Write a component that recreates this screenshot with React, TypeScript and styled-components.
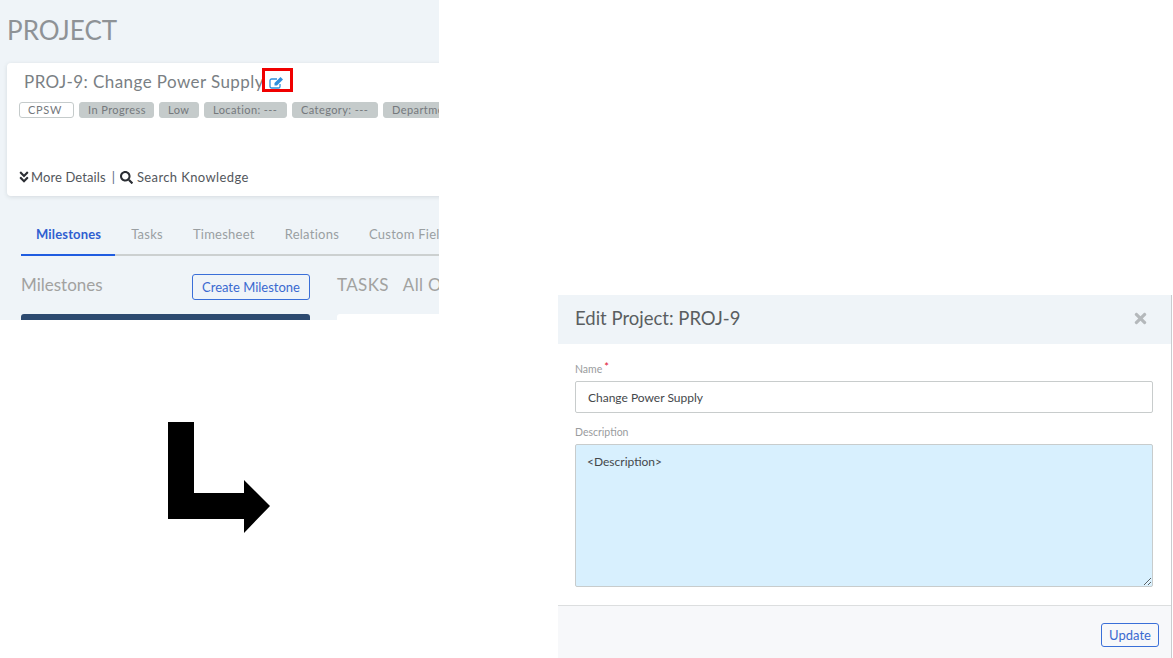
import * as React from 'react'
import styled, { createGlobalStyle } from 'styled-components'
import { FaAngleDoubleDown, FaSearch, FaTimes } from 'react-icons/fa'

const GlobalStyle = createGlobalStyle`
  html, body {
    margin: 0;
    padding: 0;
    background: #ffffff;
  }
`
const Canvas = styled.div`
  width: 1173px;
  height: 658px;
  overflow: hidden;
  display: grid;
  grid-template-columns: 439px 119px 614px;
  font-family: 'Lato', 'Open Sans', sans-serif;
`
const LeftColumn = styled.div`
  display: flex;
  flex-direction: column;
`
const ProjectShot = styled.div`
  height: 320px;
  background: #eff4f8;
  overflow: hidden;
  padding: 14px 0 0 7px;
  box-sizing: border-box;
  font-family: 'Lato', sans-serif;
`
const PageTitle = styled.div`
  font-size: 26px;
  line-height: 32px;
  font-weight: 400;
  color: #8e9296;
  letter-spacing: 0.05px;
`
const Card = styled.div`
  margin-top: 17px;
  height: 133px;
  width: 440px;
  background: #ffffff;
  border-radius: 4px;
  box-shadow: 0 1px 4px rgba(60, 70, 80, 0.14);
  padding: 5px 0 0 12px;
  box-sizing: border-box;
  display: flex;
  flex-direction: column;
`
const TitleRow = styled.div`
  display: flex;
  align-items: center;
  height: 24px;
  padding-left: 5px;
`
const CardTitle = styled.span`
  font-size: 17px;
  line-height: 28px;
  padding-top: 4px;
  letter-spacing: 0.42px;
  color: #7a7f84;
  white-space: nowrap;
  width: 238px;
`
const EditBox = styled.span`
  width: 31px;
  height: 24px;
  box-sizing: border-box;
  border: 3px solid #f00000;
  display: flex;
  align-items: center;
  justify-content: center;
  padding: 5px 3px 0 0;
`
const BadgeRow = styled.div`
  display: flex;
  gap: 5px;
  margin-top: 10px;
  white-space: nowrap;
`
const Badge = styled.span<{ $outline?: boolean; $w: number }>`
  flex: none;
  width: ${({ $w }) => $w}px;
  height: 16px;
  box-sizing: border-box;
  line-height: 14px;
  padding-left: 8px;
  border-radius: 3px;
  font-size: 11px;
  letter-spacing: ${({ $outline }) => ($outline ? 0.7 : 0.42)}px;
  color: #74787c;
  background: ${({ $outline }) => ($outline ? '#ffffff' : '#c5cbcb')};
  border: 1px solid #c5cbcb;
`
const LinkRow = styled.div`
  display: flex;
  align-items: center;
  margin-top: 51px;
  font-size: 13px;
  color: #53575c;
  white-space: nowrap;
  svg {
    color: #2a2d33;
    flex: none;
  }
`
const ChevronIcon = styled(FaAngleDoubleDown)`
  font-size: 14px;
  margin-left: -2px;
`
const LinkText = styled.span<{ $spacing: number; $gap: number }>`
  letter-spacing: ${({ $spacing }) => $spacing}px;
  margin-left: ${({ $gap }) => $gap}px;
`
const LinkDivider = styled.span`
  margin: 0 5px 0 6px;
  color: #5a6a80;
`
const Tabs = styled.div`
  display: flex;
  margin: 23px 0 0 14px;
  width: 418px;
  height: 37px;
  border-bottom: 2px solid #ccd0d0;
  box-sizing: border-box;
  overflow: hidden;
`
const Tab = styled.div<{ $active?: boolean }>`
  height: 35px;
  padding: 0 15px;
  line-height: 30px;
  font-size: 13px;
  font-weight: ${({ $active }) => ($active ? 700 : 400)};
  letter-spacing: ${({ $active }) => ($active ? 0.15 : 0.25)}px;
  white-space: nowrap;
  color: ${({ $active }) => ($active ? '#2f5fd0' : '#9a9fa2')};
`
const TabMarker = styled.div`
  height: 2px;
  width: 94px;
  margin: -2px 0 0 14px;
  background: #1f5ce0;
`
const Columns = styled.div`
  display: flex;
  margin: 18px 0 0 14px;
  gap: 27px;
  width: 430px;
`
const Milestones = styled.div`
  width: 289px;
  flex: none;
`
const MilestoneHead = styled.div`
  display: flex;
  justify-content: space-between;
  height: 40px;
`
const SectionLabel = styled.span<{ $spacing: number }>`
  font-size: 17px;
  line-height: 22px;
  letter-spacing: ${({ $spacing }) => $spacing}px;
  color: #a2a2a0;
  white-space: nowrap;
`
const OutlineButton = styled.button<{ $w: number }>`
  width: ${({ $w }) => $w}px;
  box-sizing: border-box;
  height: ${({ $w }) => ($w > 100 ? 26 : 24)}px;
  padding: 0;
  background: transparent;
  border: 1px solid #3a6fd8;
  border-radius: 3px;
  color: #3a6ad0;
  font-family: inherit;
  font-size: 13px;
`
const NavyBar = styled.div`
  height: 20px;
  background: #2d4a70;
  border-radius: 3px 3px 0 0;
`
const TasksHead = styled.div`
  display: flex;
  gap: 14px;
  height: 40px;
`
const TaskCard = styled.div`
  height: 20px;
  width: 110px;
  background: #ffffff;
  border-radius: 3px 0 0 0;
`
const ArrowArea = styled.div`
  flex: 1;
  padding: 102px 0 0 168px;
`
const Modal = styled.div`
  grid-column: 3;
  margin-top: 295px;
  height: 363px;
  border-right: 1px solid #c9cccf;
  display: flex;
  flex-direction: column;
`
const ModalHeader = styled.div`
  height: 49px;
  background: #eff4f8;
  display: flex;
  align-items: center;
  justify-content: space-between;
  padding: 0 22px 3px 17px;
  box-sizing: border-box;
  flex: none;
`
const ModalTitle = styled.div`
  font-size: 18.5px;
  color: #5a5e61;
`
const CloseIcon = styled(FaTimes)`
  color: #b4b8bb;
  font-size: 17px;
`
const ModalBody = styled.div`
  height: 261px;
  padding: 18px 18px 0 17px;
  box-sizing: border-box;
`
const FieldLabel = styled.label`
  display: block;
  font-size: 10.5px;
  line-height: 14px;
  color: #9a9c9e;
`
const Required = styled.span`
  display: inline-block;
  vertical-align: 2px;
  color: #e01030;
  font-size: 11px;
  line-height: 0;
  margin-left: 2px;
`
const TextInput = styled.input`
  display: block;
  box-sizing: border-box;
  width: 100%;
  height: 32px;
  margin: 5px 0 12px;
  padding: 0 12px;
  border: 1px solid #c8cccc;
  border-radius: 2px;
  background: #ffffff;
  color: #44484b;
  font-family: inherit;
  font-size: 12px;
`
const TextArea = styled.textarea`
  display: block;
  box-sizing: border-box;
  width: 100%;
  height: 143px;
  margin-top: 5px;
  padding: 9px 11px;
  border: 1px solid #c8cccc;
  border-radius: 2px;
  background: #d8f0fe;
  color: #44484b;
  font-family: inherit;
  font-size: 12px;
  line-height: 15px;
`
const ModalFooter = styled.div`
  flex: 1;
  background: #f7f8fa;
  border-top: 1px solid #dcdedf;
  display: flex;
  justify-content: flex-end;
  padding: 17px 12px 0 0;
`

const badges = [
  { label: 'In Progress', w: 75 },
  { label: 'Low', w: 40 },
  { label: 'Location: ---', w: 83 },
  { label: 'Category: ---', w: 86 },
  { label: 'Department: ---', w: 100 },
]
const tabs = ['Milestones', 'Tasks', 'Timesheet', 'Relations', 'Custom Fields']

// pencil-in-square, the older font-awesome edit glyph
const EditIcon = () => (
  <svg width="15" height="13" viewBox="0 0 15 13" fill="none">
    <path
      d="M11 8v2.400c0 .9-.7 1.600-1.600 1.600H2.600C1.700 12 1 11.300 1 10.400V4.600C1 3.700 1.700 3 2.600 3H8"
      stroke="#2f8fdc"
      strokeWidth="1.300"
    />
    <path d="M5.500 7 11.500 1l2.500 2.500-6 6H5.500z" fill="#2f8fdc" />
  </svg>
)

export default function App() {
  return (
    <Canvas>
      <GlobalStyle />
      <LeftColumn>
        <ProjectShot>
          <PageTitle>PROJECT</PageTitle>
          <Card>
            <TitleRow>
              <CardTitle>PROJ-9: Change Power Supply</CardTitle>
              <EditBox>
                <EditIcon />
              </EditBox>
            </TitleRow>
            <BadgeRow>
              <Badge $outline $w={55}>CPSW</Badge>
              {badges.map(b => (
                <Badge key={b.label} $w={b.w}>{b.label}</Badge>
              ))}
            </BadgeRow>
            <LinkRow>
              <ChevronIcon />
              <LinkText $spacing={0.1} $gap={0}>More Details</LinkText>
              <LinkDivider>|</LinkDivider>
              <FaSearch size={13} />
              <LinkText $spacing={0.38} $gap={4}>Search Knowledge</LinkText>
            </LinkRow>
          </Card>
          <Tabs>
            {tabs.map((t, i) => (
              <Tab key={t} $active={i === 0}>{t}</Tab>
            ))}
          </Tabs>
          <TabMarker />
          <Columns>
            <Milestones>
              <MilestoneHead>
                <SectionLabel $spacing={0}>Milestones</SectionLabel>
                <OutlineButton $w={118}>Create Milestone</OutlineButton>
              </MilestoneHead>
              <NavyBar />
            </Milestones>
            <div>
              <TasksHead>
                <SectionLabel $spacing={0.35}>TASKS</SectionLabel>
                <SectionLabel $spacing={0.35}>All Open</SectionLabel>
              </TasksHead>
              <TaskCard />
            </div>
          </Columns>
        </ProjectShot>
        <ArrowArea>
          <svg width="102" height="111" viewBox="0 0 102 111">
            <polygon points="0,0 26,0 26,71 76,71 76,58 102,84 76,111 76,97 0,97" fill="#000000" />
          </svg>
        </ArrowArea>
      </LeftColumn>
      <Modal>
        <ModalHeader>
          <ModalTitle>Edit Project: PROJ-9</ModalTitle>
          <CloseIcon />
        </ModalHeader>
        <ModalBody>
          <FieldLabel>Name<Required>*</Required></FieldLabel>
          <TextInput defaultValue="Change Power Supply" />
          <FieldLabel>Description</FieldLabel>
          <TextArea defaultValue="<Description>" />
        </ModalBody>
        <ModalFooter>
          <OutlineButton $w={58}>Update</OutlineButton>
        </ModalFooter>
      </Modal>
    </Canvas>
  )
}
